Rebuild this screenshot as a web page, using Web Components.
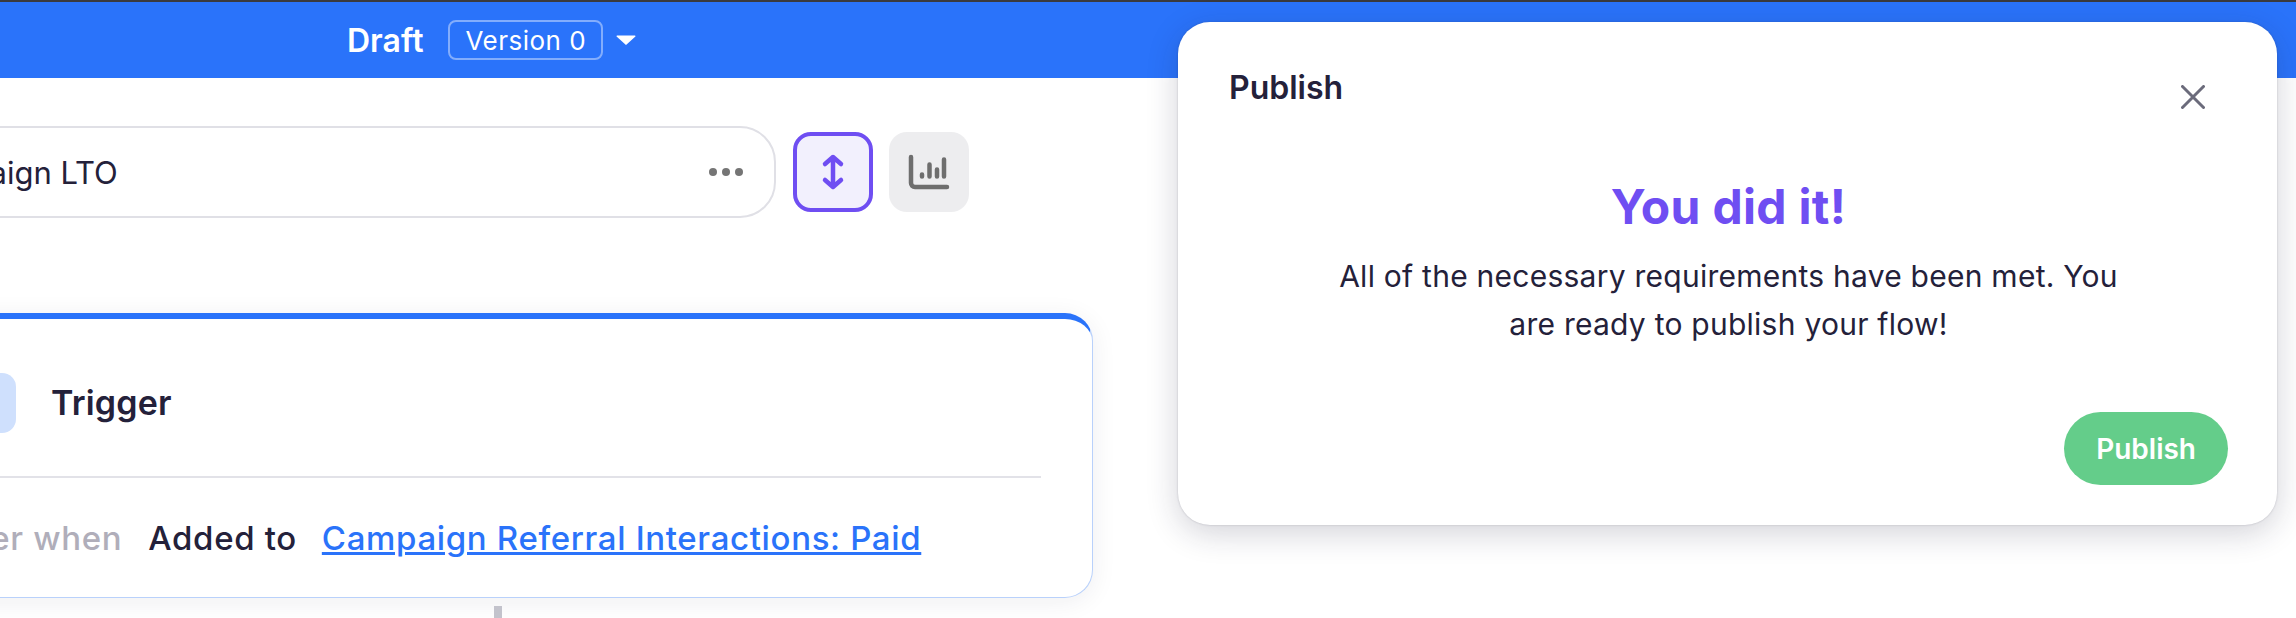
<!DOCTYPE html>
<html>
<head>
<meta charset="utf-8">
<title>Publish flow</title>
<style>
	html, body { margin: 0; padding: 0; background: #fff; }
	body { width: 2296px; height: 618px; overflow: hidden; position: relative; font-family: Inter, "Liberation Sans", sans-serif; color: #24213a; }
</style>
</head>
<body>
<flow-header status="Draft" version="Version 0"></flow-header>
<flow-toolbar name="Campaign LTO"></flow-toolbar>
<trigger-card title="Trigger" lead="Trigger when" action="Added to" link="Campaign Referral Interactions: Paid"></trigger-card>
<publish-modal>
	<span slot="title">Publish</span>
	<span slot="heading">You did it!</span>
	All of the necessary requirements have been met. You are ready to publish your flow!
	<span slot="action">Publish</span>
</publish-modal>

<script>
// FlowHeader - blue bar on top with the status and the version picker
class FlowHeader extends HTMLElement {
	constructor() {
		super();
		const shadowDom = this.attachShadow({mode:'open'});
		shadowDom.innerHTML = `
		<style>
			:host { display: flex; align-items: center; box-sizing: border-box; height: 78px; padding: 0 0 0 347px;
				border-top: 2px solid #3a3a3e; background: #2a73fa; color: #fff; }
			.status { font-size: 32px; font-weight: 600; }
			.version { display: flex; align-items: center; box-sizing: border-box; height: 40px; margin: 0 13px 0 25px; padding: 0 15px;
				border: 2px solid rgba(255,255,255,.42); border-radius: 8px; font-size: 26px; letter-spacing: .5px; }
			svg { display: block; }
		</style>
		<span class="status"></span>
		<span class="version"></span>
		<svg width="20" height="10" viewBox="0 0 20 10"><path d="M1 0.5h18a.6.6 0 0 1 .4 1L10.6 9.6a.8.8 0 0 1-1.2 0L.6 1.5a.6.6 0 0 1 .4-1z" fill="#fff"/></svg>`;
		shadowDom.querySelector(".status").textContent = this.getAttribute("status");
		shadowDom.querySelector(".version").textContent = this.getAttribute("version");
	}
}
customElements.define('flow-header', FlowHeader);

// FlowToolbar - flow name input and the two view buttons
class FlowToolbar extends HTMLElement {
	constructor() {
		super();
		const shadowDom = this.attachShadow({mode:'open'});
		shadowDom.innerHTML = `
		<style>
			:host { display: flex; align-items: center; width: 969px; height: 92px; margin: 48px 0 0 0; }
			.name { display: flex; align-items: center; justify-content: space-between; box-sizing: border-box; flex: none;
				width: 911px; height: 92px; margin-left: -135px; padding: 0 31px 0 36px;
				border: 2px solid #e0e0e6; border-radius: 36px; font-size: 31px; }
			.btn { display: flex; flex: none; box-sizing: border-box; width: 80px; height: 80px; border-radius: 18px; }
			.active { margin-left: 17px; background: #f2f0fd; border: 4px solid #6f4ef2; }
			.plain { margin-left: 16px; background: #ededef; }
			svg { display: block; }
		</style>
		<div class="name">
			<span id="name"></span>
			<svg width="34" height="10" viewBox="0 0 34 10"><g fill="#757575"><circle cx="4" cy="5" r="4"/><circle cx="17" cy="5" r="4"/><circle cx="30" cy="5" r="4"/></g></svg>
		</div>
		<div class="btn active">
			<svg width="72" height="72" viewBox="0 0 72 72" fill="none" stroke="#6f4ef2" stroke-width="4.5" stroke-linecap="round" stroke-linejoin="round">
				<path d="M36 21V51M28 28l8-7 8 7M28 44l8 7 8-7"/>
			</svg>
		</div>
		<div class="btn plain">
			<svg width="80" height="80" viewBox="0 0 80 80" fill="none" stroke="#6e6e6e" stroke-linecap="round">
				<path d="M22 25V51a4 4 0 0 0 4 4H58" stroke-width="4.500"/>
				<path d="M33 42.500v2M40.500 32.500v12M48 37.500v7M55 27.500v17" stroke-width="4.500"/>
			</svg>
		</div>`;
		shadowDom.querySelector("#name").textContent = this.getAttribute("name");
	}
}
customElements.define('flow-toolbar', FlowToolbar);

// TriggerCard - the first node of the flow, runs off the left side of the window
class TriggerCard extends HTMLElement {
	constructor() {
		super();
		const shadowDom = this.attachShadow({mode:'open'});
		shadowDom.innerHTML = `
		<style>
			:host { display: block; box-sizing: border-box; position: relative; width: 1203px; height: 285px; margin: 95px 0 0 -110px;
				padding: 0 51px; background: #fff; border: 1px solid #b9d1fb; border-top: 6px solid #2a73fa; border-radius: 28px;
				box-shadow: 0 4px 26px rgba(30,30,60,.07); }
			.head { display: flex; align-items: center; height: 159px; border-bottom: 2px solid #e2e2e8; padding-top: 10px; box-sizing: border-box; }
			.icon { flex: none; width: 74px; height: 60px; margin: 0 35px 0 0; border-radius: 14px; background: #cfe0fd; }
			.title { font-size: 34px; font-weight: 600; letter-spacing: .2px; }
			.rule { display: flex; align-items: center; height: 119px; margin-left: -37px; font-size: 33px; font-weight: 500; letter-spacing: .65px; box-sizing: border-box; }
			.lead { color: #b0aeba; margin-right: 26px; }
			.action { margin-right: 25px; }
			a { color: #2a73fa; text-decoration: underline; }
			.connector { position: absolute; left: 603px; top: 287px; width: 8px; height: 30px; background: #c3c3cc; }
		</style>
		<div class="head"><div class="icon"></div><span class="title" id="title"></span></div>
		<div class="rule">
			<span class="lead" id="lead"></span>
			<span class="action" id="action"></span>
			<a href="#" id="link"></a>
		</div>
		<div class="connector"></div>`;
		for (const key of ["title", "lead", "action", "link"]) {
			shadowDom.querySelector("#" + key).textContent = this.getAttribute(key);
		}
	}
}
customElements.define('trigger-card', TriggerCard);

// PublishModal - floating dialog, lies over the header
class PublishModal extends HTMLElement {
	constructor() {
		super();
		const shadowDom = this.attachShadow({mode:'open'});
		shadowDom.innerHTML = `
		<style>
			:host { display: flex; flex-direction: column; box-sizing: border-box; position: absolute; left: 1178px; top: 22px; width: 1099px; height: 503px;
				padding: 46px 49px 40px 51px; background: #fff; border-radius: 32px; box-shadow: 0 0 2px rgba(40,40,60,.25), 0 8px 32px rgba(30,30,60,.2); }
			.top { display: flex; justify-content: space-between; align-items: flex-start; }
			.title { font-size: 32px; font-weight: 600; line-height: 40px; }
			svg { display: block; margin: 17px 23px 0 0; }
			.heading { margin-top: 67px; text-align: center; color: #6f4ef2; font-size: 48px; font-weight: 700; letter-spacing: .3px; line-height: 62px; }
			.body { width: 800px; margin: 14px auto 0; text-align: center; font-size: 30px; letter-spacing: .25px; line-height: 48px; }
			.foot { display: flex; justify-content: flex-end; margin-top: auto; }
			.publish { display: flex; align-items: center; height: 73px; padding: 0 32px; border-radius: 37px; background: #64cd8a; color: #fff; font-size: 28px; font-weight: 600; }
		</style>
		<div class="top">
			<span class="title"><slot name="title"></slot></span>
			<svg width="24" height="24" viewBox="0 0 24 24" fill="none" stroke="#6b6b7b" stroke-width="3" stroke-linecap="round"><path d="M1.500 1.500l21 21M22.500 1.500l-21 21"/></svg>
		</div>
		<div class="heading"><slot name="heading"></slot></div>
		<div class="body"><slot></slot></div>
		<div class="foot"><div class="publish"><slot name="action"></slot></div></div>`;
	}
}
customElements.define('publish-modal', PublishModal);
</script>
</body>
</html>
